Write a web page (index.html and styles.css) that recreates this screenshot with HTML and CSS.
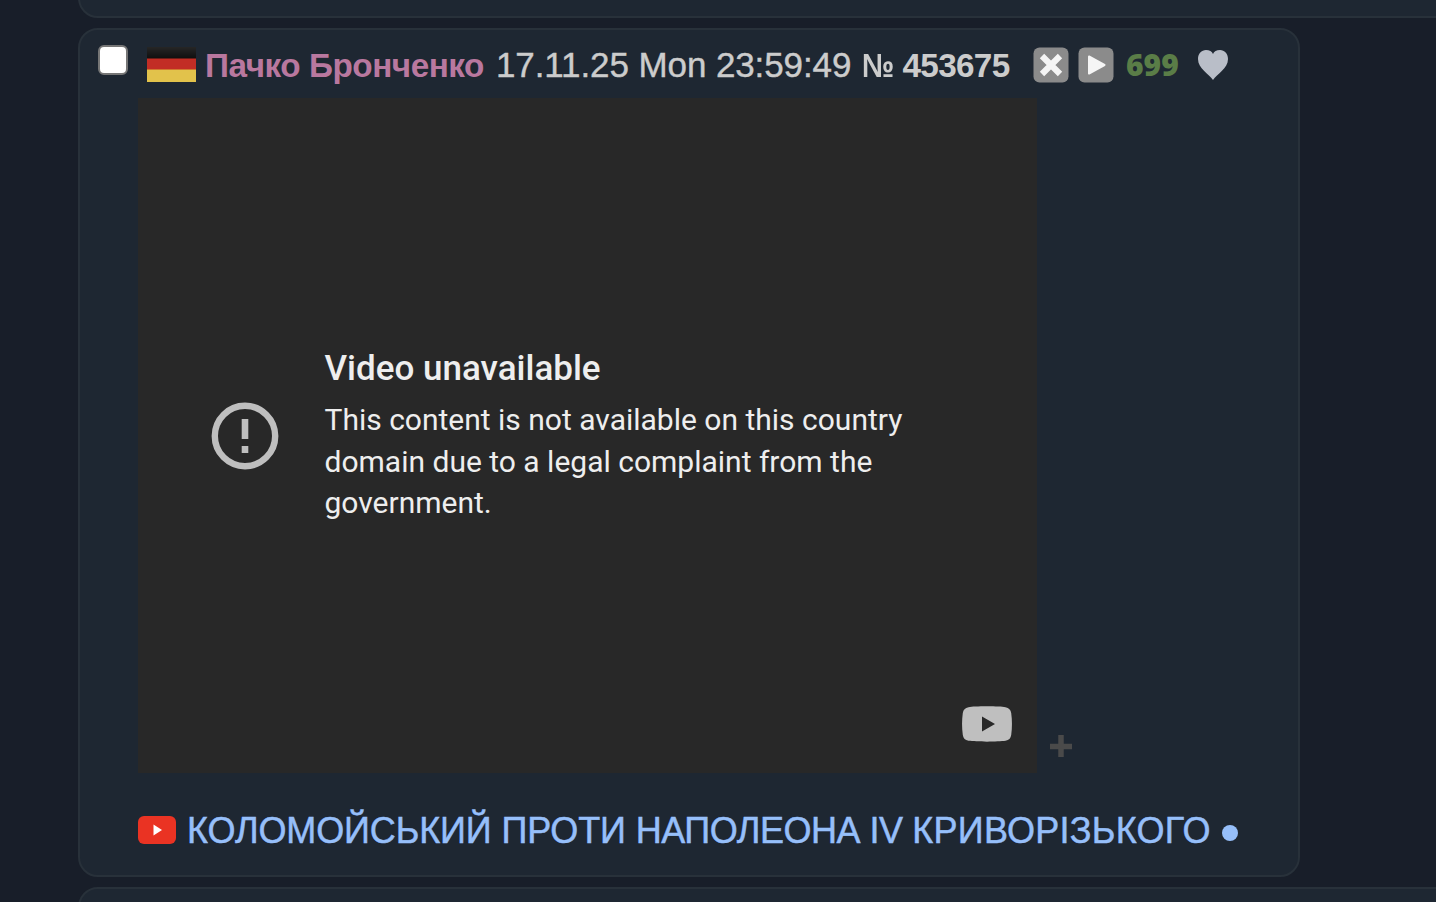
FILE: index.html
```
<!DOCTYPE html>
<html lang="uk">

<head>
    <meta charset="UTF-8">
    <meta name="viewport" content="width=device-width, initial-scale=1.0">
    <title>№ 453675</title>
    <link rel="stylesheet" href="styles.css">
</head>

<body>
    <div class="thread">
        <div class="post post-prev"></div>
        <div class="post">
            <div class="post-head">
                <input type="checkbox" class="check">
                <svg class="flag" width="49" height="35" viewBox="0 0 49 35">
                    <defs>
                        <linearGradient id="black" x1="0" y1="0" x2="0" y2="1">
                            <stop offset="0" stop-color="#262626" />
                            <stop offset="1" stop-color="#101010" />
                        </linearGradient>
                    </defs>
                    <rect width="49" height="11" fill="url(#black)" />
                    <rect y="11" width="49" height="12" fill="#c22d25" />
                    <rect y="11" width="49" height="1" fill="#6b1d17" />
                    <rect y="22" width="49" height="13" fill="#e2c24b" />
                    <rect y="22" width="49" height="1" fill="#d0772f" />
                </svg>
                <span class="name">Пачко Бронченко</span>
                <span class="date">17.11.25 Mon 23:59:49</span>
                <span class="number"><span class="no">№</span> 453675</span>
                <svg class="btn" width="36" height="36" viewBox="0 0 36 36">
                    <rect x=".5" y=".5" width="35" height="35" rx="6" fill="#8b8b8b" />
                    <path d="M9 9L27 27M27 9L9 27" stroke="#f5f5f5" stroke-width="6.2" />
                </svg>
                <svg class="btn btn-play" width="36" height="36" viewBox="0 0 36 36">
                    <rect x=".5" y=".5" width="35" height="35" rx="6" fill="#8b8b8b" />
                    <path d="M11 9.5L26.5 18L11 26.5z" fill="#f5f5f5" stroke="#f5f5f5" stroke-width="2" stroke-linejoin="round" />
                </svg>
                <span class="count">699</span>
                <svg class="heart" width="30" height="30" viewBox="0 0 30 30">
                    <path d="M15 30C11 24 0 18.500 0 9C0 3.500 3.500 0 8 0C11.500 0 14 1.500 15 4C16 1.500 18.500 0 22 0C26.500 0 30 3.500 30 9C30 18.500 19 24 15 30z" fill="#b9bec8" />
                </svg>
            </div>
            <div class="media">
                <div class="video">
                    <div class="error">
                        <svg class="error-icon" width="68" height="68" viewBox="0 0 68 68">
                            <circle cx="34" cy="34" r="30.200" fill="none" stroke="#bfbfbf" stroke-width="6.400" />
                            <path d="M30.700 17h6.600v20h-6.600zM30.700 44h6.600v7h-6.600z" fill="#bfbfbf" />
                        </svg>
                        <div class="error-text">
                            <div class="error-title">Video unavailable</div>
                            <div class="error-reason">This content is not available on this country<br>domain due to a legal complaint from the<br>government.</div>
                        </div>
                    </div>
                    <svg class="yt" width="50" height="36" viewBox="0 0 50 36">
                        <path d="M25 .3C34 .3 40 .6 43.500 1.200C47 1.800 48.600 3.700 49.200 7C50.200 14 50.200 22 49.200 29C48.600 32.300 47 34.200 43.500 34.800C36 35.900 14 35.900 6.500 34.800C3 34.200 1.400 32.300.8 29C-.2 22-.2 14 .8 7C1.400 3.700 3 1.800 6.500 1.200C10 .6 16 .3 25 .3zM20 10.500V25.500L33 18z" fill="#bfbfbf" fill-rule="evenodd" />
                    </svg>
                </div>
                <svg class="plus" width="24" height="24" viewBox="0 0 24 24">
                    <path d="M12 1v22M1 12.500h22" stroke="#4a4a4a" stroke-width="5.500" />
                </svg>
            </div>
            <div class="link-row">
                <svg class="yt-red" width="40" height="30" viewBox="0 0 40 30">
                    <rect x="1" y="1" width="38" height="28" rx="6" fill="#ea3323" />
                    <path d="M16.500 9.500L25 15L16.500 20.500z" fill="#fff" />
                </svg>
                <a class="link">КОЛОМОЙСЬКИЙ ПРОТИ <span class="tight">НАПОЛЕОНА IV</span> <span class="wide">КРИВОРІЗЬКОГО</span></a>
                <span class="dot"></span>
            </div>
        </div>
        <div class="post post-next"></div>
    </div>
</body>

</html>
```
FILE: styles.css
```
* {
    box-sizing: border-box;
}

body {
    margin: 0;
    background-color: #181e29;
    font-family: "Liberation Sans", Arial, sans-serif;
    overflow: hidden;
}

svg {
    display: block;
    flex: none;
}

.thread {
    display: flex;
    flex-direction: column;
    gap: 10px;
    height: 902px;
    padding-left: 78px;
    overflow: hidden;
}

.post {
    flex: none;
    width: 1222px;
    height: 849px;
    border: 2px solid #28313a;
    border-radius: 20px;
    background-color: #1e2732;
}

.post-prev,
.post-next {
    width: 1400px;
    height: 60px;
}

.post-prev {
    margin-top: -42px;
}

.post-head {
    display: flex;
    align-items: flex-start;
    height: 68px;
    padding: 15px 0 0 18px;
    line-height: 40px;
    white-space: nowrap;
}

.check {
    appearance: none;
    flex: none;
    width: 30px;
    height: 30px;
    margin: 0;
    border: 2px solid #767676;
    border-radius: 6px;
    background-color: #fff;
}

.flag {
    margin: 2px 0 0 19px;
}

.name {
    flex: none;
    width: 300px;
    padding: 1px 0 0 9px;
    color: #b9789f;
    font-size: 33.3px;
    font-weight: bold;
    letter-spacing: -0.47px;
}

.date {
    flex: none;
    width: 366px;
    color: #ccc;
    font-size: 35px;
    letter-spacing: -0.1px;
    -webkit-text-stroke: 0.4px #ccc;
}

.number {
    flex: none;
    width: 171px;
    padding-top: 1px;
    color: #ccc;
    font-size: 33.3px;
    font-weight: bold;
    letter-spacing: -0.7px;
    word-spacing: 1px;
}

.no {
    display: inline-block;
    width: 31px;
    transform: scaleX(0.87);
    transform-origin: left;
}

.btn {
    margin-top: 2px;
}

.btn-play {
    margin-left: 9px;
}

.count {
    flex: none;
    width: 84px;
    padding-left: 12px;
    color: #5a7d47;
    font-family: "Open Sans", sans-serif;
    font-size: 30px;
    font-weight: 800;
}

.heart {
    margin-top: 5px;
}

.media {
    display: flex;
    align-items: flex-end;
    padding-left: 58px;
}

.video {
    display: flex;
    flex-direction: column;
    justify-content: space-between;
    width: 899px;
    height: 675px;
    padding: 250px 25px 31px 73px;
    background-color: #282828;
}

.error {
    display: flex;
}

.error-icon {
    margin-top: 54px;
}

.error-text {
    padding-left: 45.5px;
    color: #eee;
    font-family: Roboto, sans-serif;
    white-space: nowrap;
}

.error-title {
    font-size: 35px;
    font-weight: 500;
    line-height: 42px;
}

.error-reason {
    margin-top: 9px;
    font-size: 30px;
    line-height: 41.6px;
}

.yt {
    align-self: flex-end;
}

.plus {
    margin: 0 0 15px 12px;
}

.link-row {
    display: flex;
    align-items: center;
    height: 40px;
    margin-top: 38px;
    padding-left: 57px;
}

.yt-red {
    margin-top: -2px;
    filter: blur(0.6px);
}

.link {
    width: 1045px;
    padding-left: 10px;
    color: #96bffa;
    font-size: 36px;
    line-height: 40px;
    letter-spacing: -0.12px;
    white-space: nowrap;
    -webkit-text-stroke: 0.5px #96bffa;
}

.tight {
    letter-spacing: -0.5px;
}

.wide {
    letter-spacing: 0.25px;
}

.dot {
    width: 16px;
    height: 16px;
    margin-top: 4px;
    border-radius: 50%;
    background-color: #96bffa;
}
```
